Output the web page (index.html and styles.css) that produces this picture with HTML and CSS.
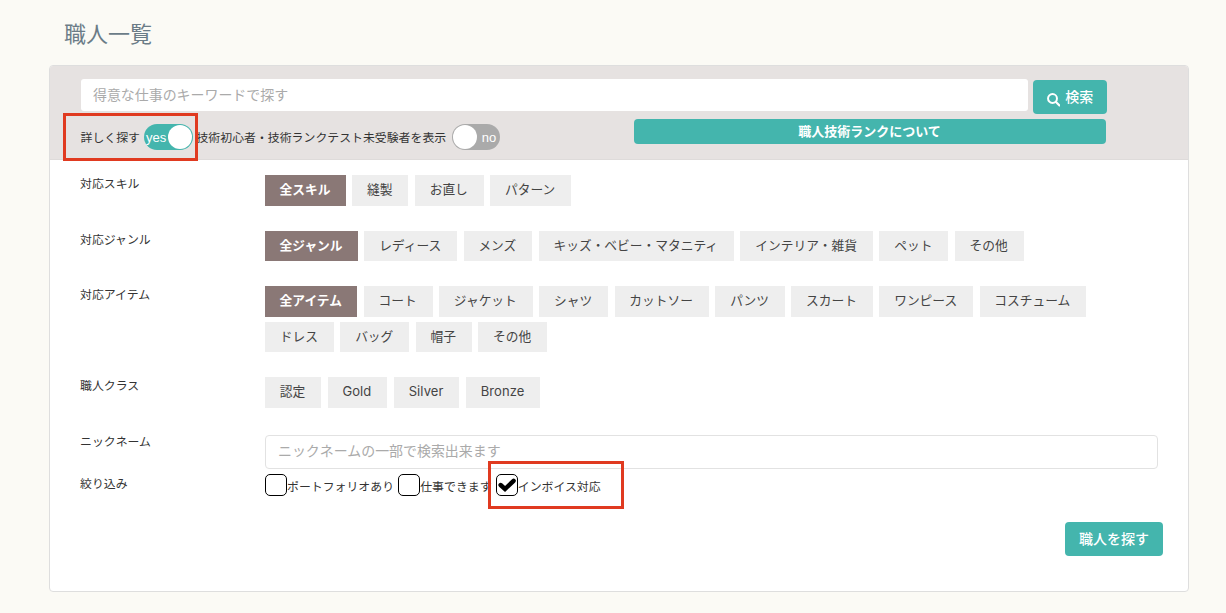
FILE: index.html
```html
<!DOCTYPE html>
<html lang="ja">
<head>
  <meta charset="UTF-8">
  <meta name="viewport" content="width=device-width, initial-scale=1.0">
  <title>職人一覧</title>
  <link rel="stylesheet" href="styles.css">
</head>
<body>
  <h1 class="page-title">職人一覧</h1>

  <form class="panel">
    <div class="panel-heading">
      <div class="keyword-row">
        <input type="text" class="keyword-input" placeholder="得意な仕事のキーワードで探す">
        <button type="button" class="btn btn-search">
          <svg class="icon-search" viewBox="0 0 13 13"><circle cx="5.3" cy="5.3" r="4.3" fill="none" stroke="currentColor" stroke-width="1.9"/><path d="M8.6 8.6L12 12" stroke="currentColor" stroke-width="2.1" stroke-linecap="round"/></svg>
          <span>検索</span>
        </button>
      </div>
      <div class="switch-row">
        <div class="switch-item marked mark-detail">
          <span class="switch-label">詳しく探す</span>
          <span class="switch on"><span class="switch-text">yes</span><span class="knob"></span></span>
        </div>
        <div class="switch-item beginner">
          <span class="switch-label">技術初心者・技術ランクテスト未受験者を表示</span>
          <span class="switch"><span class="knob"></span><span class="switch-text">no</span></span>
        </div>
        <a class="rank-link">職人技術ランクについて</a>
      </div>
    </div>

    <div class="panel-body">
      <div class="row">
        <div class="row-label">対応スキル</div>
        <div class="chips">
          <span class="chip active">全スキル</span>
          <span class="chip">縫製</span>
          <span class="chip">お直し</span>
          <span class="chip">パターン</span>
        </div>
      </div>
      <div class="row">
        <div class="row-label">対応ジャンル</div>
        <div class="chips">
          <span class="chip active">全ジャンル</span>
          <span class="chip">レディース</span>
          <span class="chip">メンズ</span>
          <span class="chip">キッズ・ベビー・マタニティ</span>
          <span class="chip">インテリア・雑貨</span>
          <span class="chip">ペット</span>
          <span class="chip">その他</span>
        </div>
      </div>
      <div class="row">
        <div class="row-label">対応アイテム</div>
        <div class="chips">
          <span class="chip active">全アイテム</span>
          <span class="chip">コート</span>
          <span class="chip">ジャケット</span>
          <span class="chip">シャツ</span>
          <span class="chip">カットソー</span>
          <span class="chip">パンツ</span>
          <span class="chip">スカート</span>
          <span class="chip">ワンピース</span>
          <span class="chip">コスチューム</span>
          <span class="chip">ドレス</span>
          <span class="chip">バッグ</span>
          <span class="chip">帽子</span>
          <span class="chip">その他</span>
        </div>
      </div>
      <div class="row">
        <div class="row-label">職人クラス</div>
        <div class="chips">
          <span class="chip">認定</span>
          <span class="chip latin">Gold</span>
          <span class="chip latin">Silver</span>
          <span class="chip latin">Bronze</span>
        </div>
      </div>
      <div class="row row-nickname">
        <div class="row-label">ニックネーム</div>
        <input type="text" class="nickname-input" placeholder="ニックネームの一部で検索出来ます">
      </div>
      <div class="row row-filter">
        <div class="row-label">絞り込み</div>
        <div class="checks">
          <div class="check"><span class="box"></span><span>ポートフォリオあり</span></div>
          <div class="check"><span class="box"></span><span>仕事できます</span></div>
          <div class="check marked mark-invoice">
            <span class="box"><svg class="icon-check" viewBox="0 0 18 14"><path d="M2.6 7L7 11L15.6 2.8" fill="none" stroke="#000" stroke-width="4.4" stroke-linecap="round"/></svg></span><span>インボイス対応</span>
          </div>
        </div>
      </div>
      <div class="actions">
        <button type="button" class="btn btn-submit">職人を探す</button>
      </div>
    </div>
  </form>
</body>
</html>
```
FILE: styles.css
```css
* {
  box-sizing: border-box;
}

body {
  margin: 0;
  padding: 14px 37px 0 49px;
  background-color: #fbfaf5;
  color: #333;
  font-family: "Noto Sans CJK JP", sans-serif;
  font-size: 11.9px;
}

.page-title {
  margin: 0 0 15px 15px;
  font-size: 22px;
  font-weight: 400;
  line-height: 36px;
  color: #6b7c87;
}

.panel {
  height: 527px;
  background-color: #fff;
  border: 1px solid #dedede;
  border-radius: 4px;
}

.panel-heading {
  height: 94px;
  padding: 13px 30px 0 31px;
  background-color: #e6e2e1;
  border-bottom: 1px solid #dedbda;
  border-radius: 3px 3px 0 0;
}

.keyword-row {
  display: flex;
  gap: 5px;
}

.keyword-input,
.nickname-input {
  font-family: inherit;
  font-size: 13.95px;
  padding: 0 12px;
  border: 1px solid #e2e2e2;
  border-radius: 4px;
  background-color: #fff;
}

.keyword-input {
  width: 947px;
  height: 32px;
  padding-bottom: 3px;
  border: none;
  border-radius: 3px;
}

.keyword-input::placeholder,
.nickname-input::placeholder {
  color: #aaa;
}

.btn {
  display: flex;
  align-items: center;
  justify-content: center;
  height: 34px;
  padding: 0 0 2px;
  border: none;
  border-radius: 4px;
  background-color: #44b5ad;
  color: #fff;
  font-family: inherit;
  font-size: 14px;
  font-weight: 500;
}

.btn-search {
  width: 74px;
  margin-top: 1px;
  gap: 5px;
}

.icon-search {
  width: 13.5px;
  height: 13.5px;
  margin-top: 8px;
}

.switch-row {
  display: flex;
  align-items: flex-start;
}

.switch-item {
  display: flex;
  align-items: center;
  height: 26px;
  margin-top: 10px;
  gap: 4px;
  white-space: nowrap;
}

.switch-label {
  margin: -2px 0 0 -0.5px;
}

.beginner {
  margin-left: 4px;
  width: 437.5px;
}

.beginner .switch {
  width: 48px;
  margin-left: 2px;
}

.switch {
  display: flex;
  align-items: center;
  justify-content: space-between;
  width: 49px;
  height: 26px;
  padding: 0 1px;
  border-radius: 13px;
  background-color: #aaa;
  color: #fff;
  font-family: "Liberation Sans", Arial, sans-serif;
  font-size: 13px;
}

.switch .switch-text {
  padding-right: 3px;
}

.switch.on {
  background-color: #44b5ad;
}

.switch.on .switch-text {
  padding: 0 0 0 1px;
}

.knob {
  width: 24px;
  height: 24px;
  border-radius: 50%;
  background-color: #fff;
}

.rank-link {
  width: 472px;
  height: 25px;
  margin-top: 5px;
  padding-right: 2px;
  border-radius: 4px;
  background-color: #44b5ad;
  color: #fff;
  font-size: 13px;
  font-weight: 700;
  line-height: 24px;
  text-align: center;
}

/* red frames around the highlighted controls */
.marked {
  position: relative;
}

.marked::after {
  content: "";
  position: absolute;
  box-sizing: border-box;
  border: 3px solid #e03a20;
}

.mark-detail::after {
  top: -11px;
  left: -18px;
  width: 135px;
  height: 48px;
}

.mark-invoice::after {
  top: -13px;
  left: -8px;
  width: 136px;
  height: 48px;
}

.panel-body {
  padding: 15px 25px 0 30px;
}

.row {
  display: flex;
  margin-bottom: 25px;
}

.row-label {
  width: 185px;
  flex-shrink: 0;
  line-height: 16px;
}

.chips {
  display: flex;
  flex-wrap: wrap;
  gap: 5.2px 6.4px;
  width: 860px;
}

.chip {
  height: 30.5px;
  padding: 0 16px 0 14.8px;
  background-color: #eee;
  color: #444;
  font-size: 12.73px;
  line-height: 27px;
  white-space: nowrap;
}

.chip.active {
  padding: 0 15.4px 0 14.6px;
  background-color: #8a7876;
  color: #fff;
  font-weight: 700;
}

.chip.latin {
  font-family: Inter, sans-serif;
  font-size: 13px;
  line-height: 29px;
  letter-spacing: 0.1px;
}

.row-nickname {
  margin-bottom: 5px;
}

.nickname-input {
  width: 893px;
  height: 34px;
  margin-top: 2px;
  padding-bottom: 3px;
}

.row-filter {
  margin-bottom: 26px;
}

.row-filter .row-label {
  padding-top: 1px;
}

.checks {
  display: flex;
  gap: 4.2px;
}

.check {
  display: flex;
  height: 22px;
  line-height: 23px;
  white-space: nowrap;
}

.box {
  display: flex;
  align-items: center;
  justify-content: center;
  width: 22px;
  height: 22px;
  border: 1px solid #000;
  border-radius: 5px;
  background-color: #fff;
}

.icon-check {
  width: 18px;
  height: 14px;
  flex-shrink: 0;
}

.actions {
  display: flex;
  justify-content: flex-end;
}

.btn-submit {
  width: 98px;
}
```
